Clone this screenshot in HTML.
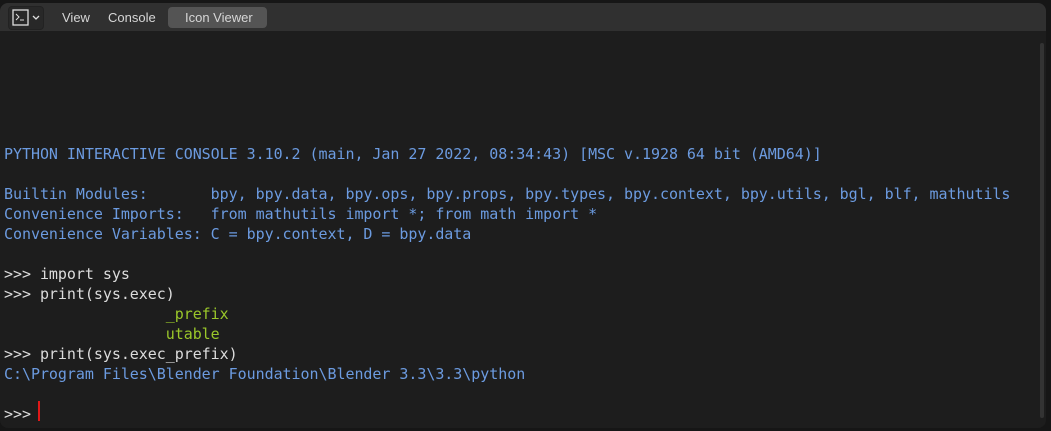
<!DOCTYPE html>
<html><head><style>
html,body{margin:0;padding:0;background:#161616;width:1051px;height:431px;overflow:hidden}
#p{position:absolute;left:0;top:3px;width:1046px;height:425px;background:#1d1d1d;border-radius:8px;overflow:hidden}
#h{position:absolute;left:0;top:0;width:100%;height:28px;background:#303030}
.t{position:absolute;font-family:"Liberation Sans",sans-serif;font-size:13px;color:#d6d6d6;top:7px}
#btn{position:absolute;left:8px;top:3px;width:34px;height:22px;background:#282828;border-radius:4px;border:1px solid #222}
#iv{position:absolute;left:168px;top:4px;width:99px;height:21px;background:#545454;border-radius:4px}
#c{position:absolute;left:4px;top:144px;font-family:"DejaVu Sans Mono",monospace;font-size:15px;letter-spacing:-0.045px;line-height:20px;white-space:pre;color:#dcdcdc}
.b{color:#6c9be0}.g{color:#9ac72a}
#sb{position:absolute;left:1040px;top:40px;width:4px;height:375px;background:#333;border-radius:2px}
#cur{position:absolute;left:38px;top:401px;width:2px;height:20px;background:#e01818}
</style></head><body>
<div id="p">
<div id="h">
<div id="btn"><svg width="34" height="22"><rect x="4" y="3" width="15" height="15" fill="none" stroke="#ddd" stroke-width="1.3"/><path d="M7 7l3 3-3 3M11 13h4" stroke="#ddd" fill="none" stroke-width="1"/><path d="M24 9l3 3 3-3" stroke="#ddd" fill="none" stroke-width="1.3"/></svg></div>
<div class="t" style="left:62px">View</div>
<div class="t" style="left:108px">Console</div>
<div id="iv"></div>
<div class="t" style="left:185px">Icon Viewer</div>
</div>
<div id="sb"></div>
</div>
<div id="c"><span class="b">PYTHON INTERACTIVE CONSOLE 3.10.2 (main, Jan 27 2022, 08:34:43) [MSC v.1928 64 bit (AMD64)]

Builtin Modules:       bpy, bpy.data, bpy.ops, bpy.props, bpy.types, bpy.context, bpy.utils, bgl, blf, mathutils
Convenience Imports:   from mathutils import *; from math import *
Convenience Variables: C = bpy.context, D = bpy.data</span>

&gt;&gt;&gt; import sys
&gt;&gt;&gt; print(sys.exec)
<span class="g">                  _prefix
                  utable</span>
&gt;&gt;&gt; print(sys.exec_prefix)
<span class="b">C:\Program Files\Blender Foundation\Blender 3.3\3.3\python</span>

&gt;&gt;&gt; </div>
<div id="cur"></div>
</body></html>
